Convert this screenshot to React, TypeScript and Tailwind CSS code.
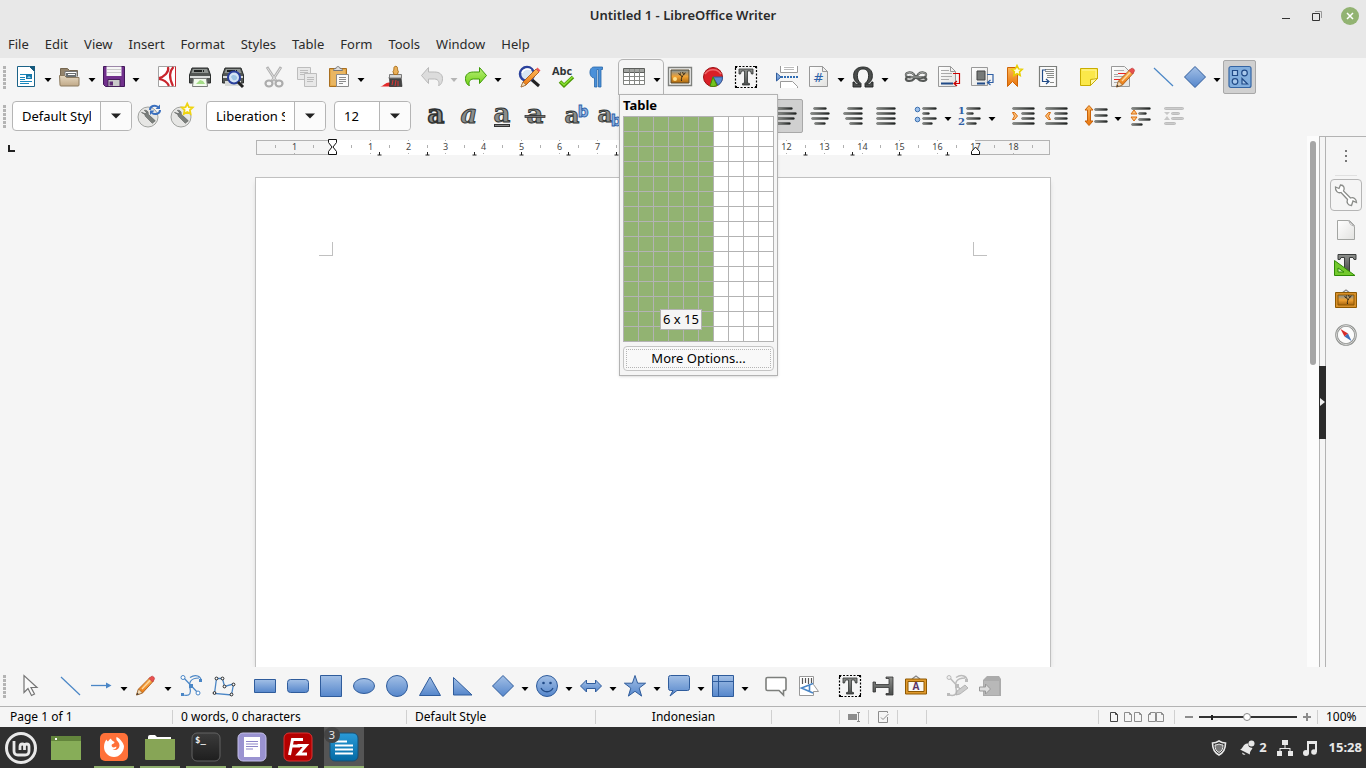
import type { ReactNode } from "react";

const menus = ["File", "Edit", "View", "Insert", "Format", "Styles", "Table", "Form", "Tools", "Window", "Help"];

/* ---------- shared drawing helpers ---------- */

function Defs() {
    return (
        <svg width="0" height="0" className="absolute" aria-hidden="true">
            <defs>
                <linearGradient id="blue" x1="0" y1="0" x2="0" y2="1"><stop offset="0" stopColor="#a3c0e6" /><stop offset="1" stopColor="#5586cb" /></linearGradient>
                <linearGradient id="bar" x1="0" y1="0" x2="1" y2="0"><stop offset="0" stopColor="#8b8e89" /><stop offset="1" stopColor="#1c1f1e" /></linearGradient>
                <linearGradient id="dark" x1="0" y1="0" x2="0" y2="1"><stop offset="0" stopColor="#8d8f8c" /><stop offset="1" stopColor="#4b4e4d" /></linearGradient>
                <linearGradient id="orange" x1="0" y1="0" x2="0" y2="1"><stop offset="0" stopColor="#fdb75a" /><stop offset="1" stopColor="#e8730a" /></linearGradient>
                <linearGradient id="paper" x1="0" y1="0" x2="1" y2="1"><stop offset="0" stopColor="#fff" /><stop offset="1" stopColor="#e2e2e0" /></linearGradient>
                <linearGradient id="tan" x1="0" y1="0" x2="0" y2="1"><stop offset="0" stopColor="#e6d8c0" /><stop offset="1" stopColor="#c0a988" /></linearGradient>
                <linearGradient id="green" x1="0" y1="0" x2="0" y2="1"><stop offset="0" stopColor="#b8ee7a" /><stop offset="1" stopColor="#73d216" /></linearGradient>
                <linearGradient id="sunset" x1="0" y1="0" x2="0" y2="1"><stop offset="0" stopColor="#7d92a0" /><stop offset=".5" stopColor="#f0a132" /><stop offset="1" stopColor="#a8660f" /></linearGradient>
                <linearGradient id="writer" x1="0" y1="0" x2="0" y2="1"><stop offset="0" stopColor="#2a9bd8" /><stop offset="1" stopColor="#0369a3" /></linearGradient>
                <linearGradient id="term" x1="0" y1="0" x2="0" y2="1"><stop offset="0" stopColor="#3b3b3b" /><stop offset="1" stopColor="#1e1e1e" /></linearGradient>
            </defs>
        </svg>
    );
}

function Icon({ children, className = "size-6" }: { children: ReactNode; className?: string }) {
    return <svg viewBox="0 0 24 24" className={`${className} shrink-0 overflow-visible`} fill="none" aria-hidden="true">{children}</svg>;
}

function Caret() {
    return <svg viewBox="0 0 8 24" className="h-6 w-2 shrink-0" aria-hidden="true"><path d="M.5 13h7L4 17z" fill="currentColor" /></svg>;
}

function Bars({ rows, fill = "url(#bar)", stroke = "#33363560" }: { rows: number[][]; fill?: string; stroke?: string }) {
    return <>{rows.map(([x, y, w]) => <rect key={y} x={x + .5} y={y + .5} width={w - 1} height="2" rx="1" fill={fill} stroke={stroke} />)}</>;
}

function Pencil() {
    return (
        <>
            <path d="M4.500 21l2-6L18 3.500l3.500 3.500L10.500 19z" fill="url(#orange)" stroke="#a4520c" strokeWidth=".8" />
            <path d="M10 15L18.500 6" stroke="#fdd9a0" strokeWidth="1.300" />
            <path d="M6.500 15l4 4-6 2z" fill="#f3dcb8" stroke="#8a5a28" strokeWidth=".6" /><path d="M4.500 21l.8-2.300 1.600 1.500z" fill="#333" />
            <path d="M17 4.500l1.800-1.800q1.600-1.200 3 .3t.2 3L20.500 8z" fill="#e8504f" stroke="#b33" strokeWidth=".6" />
        </>
    );
}

function Tree() {
    return <path d="M13.500 16c-.5-2 .3-3 .4-4.500-.6-1.700-2.500-1.500-3.500-3M13.900 12c.6-2 2.600-2 3.300-4.500M12.200 9.800c-.3-1-.1-1.500.3-2.300M15.500 9.500c-.2-1-.7-1.500-.9-2.500" stroke="#2b2212" strokeWidth="1" />;
}

function Letter({ x = 12, y = 19, size = 26, width = .9, italic = false, children }: { x?: number; y?: number; size?: number; width?: number; italic?: boolean; children: string }) {
    return <text x={x} y={y} fontSize={size} textAnchor="middle" fontFamily="DejaVu Serif" fontWeight="bold" fontStyle={italic ? "italic" : "normal"} fill="#8a8d8b" stroke="#2f3231" strokeWidth={width}>{children}</text>;
}

const blueShape = { fill: "url(#blue)", stroke: "#2f5c9c", strokeWidth: 1 };

/* ---------- standard toolbar icons ---------- */

const NewDoc = <Icon><path d="M3.500 1.500h12l5 5v15h-17z" fill="#fff" stroke="#1b6388" /><path d="M15 1h6v6z" fill="#15597c" /><path d="M6 9.500h6M6 12.500h5M6 14.500h5M6 16.500h12M6 18.500h9" stroke="#1887bd" strokeWidth="1.200" /><path d="M12 9h6v5h-6z" fill="#1678aa" /><path d="M13 13l2-2 2 2z" fill="#9bd3f0" /></Icon>;
const Open = <Icon><path d="M2.500 18V3.500h7l2 2h8V11" fill="#94846c" stroke="#75664f" /><path d="M7 6.500h12v8H7z" fill="#fff" stroke="#777" /><path d="M8 8h10v5H8z" fill="#6b6f70" /><path d="M10 9.500h7" stroke="#fff" /><path d="M1.500 10.500h5l2 2h12.500v7.500a1 1 0 0 1-1 1H3a1 1 0 0 1-1-1z" fill="url(#tan)" stroke="#8c7a5e" /></Icon>;
const Save = <Icon><path d="M1.500 1.500h21v20h-19l-2-2z" fill="#71308c" stroke="#42185a" /><path d="M4.500 1.500h15v9.500h-15z" fill="#f6f6f6" /><path d="M5 4.500h14M5 7.500h14" stroke="#ccc" /><path d="M6 14.500h12v7H6z" fill="#c9c9c9" stroke="#462059" /><path d="M7.500 16.500h3.500v4H7.500z" fill="#5f2b75" /></Icon>;
const Pdf = <Icon><path d="M3.500 1.500h17v20h-17z" fill="#fff" stroke="#a3a3a3" /><path d="M13 2c1.500 5-4 10-9 11M18.500 2c-5 5-4 12-.5 19M4 14c5 .500 8 3 10 7" stroke="#c9252d" strokeWidth="2.200" /><path d="M20.500 1.500v20" stroke="#c9252d" /></Icon>;
const printer = <><path d="M4 3h16l2.500 7v8h-21v-8z" fill="#525654" stroke="#2c2f2e" /><path d="M5 4h14l1.500 4h-17z" fill="#8f9491" /><path d="M6 6h10" stroke="#202322" strokeWidth="2" strokeDasharray="8 1" /><path d="M2 11h20v2H2z" fill="#d9dbda" /></>;
const Print = <Icon>{printer}<path d="M5.500 13.500h13l1 8h-15z" fill="#f3fbee" stroke="#7c7f7c" /><path d="M8 19l4-4 3 1 2 3z" fill="#a5dd88" /></Icon>;
const Preview = <Icon>{printer}<path d="M4 16h16v5H4z" fill="#d8dad8" /><circle cx="13" cy="12.500" r="6" fill="#d5e4f4" stroke="#2a409c" strokeWidth="2" /><path d="M10 12c1-3 5-2 6 0s-2 4-4 3z" fill="#9ec4e4" /><path d="M17 17l5 5" stroke="#222" strokeWidth="3" /></Icon>;
const Cut = <Icon><path d="M5 2l9 14M19 2l-9 14" stroke="#b2b2b2" strokeWidth="2.800" /><path d="M5.500 3l8 12M18.500 3l-8 12" stroke="#dedede" /><ellipse cx="7" cy="18.500" rx="3.500" ry="3" stroke="#acacac" strokeWidth="2.200" /><ellipse cx="17" cy="18.500" rx="3.500" ry="3" stroke="#acacac" strokeWidth="2.200" /></Icon>;
const Copy = <Icon><path d="M2.500 2.500h13v12h-13z" fill="#e8e8e8" stroke="#bdbdbd" /><path d="M5 5.500h8M5 7.500h8M5 9.500h7" stroke="#bdbdbd" /><path d="M9.500 8.500h12v13h-12z" fill="#e8e8e8" stroke="#bdbdbd" /><path d="M12 12.500h7M12 14.500h7M12 16.500h6" stroke="#bdbdbd" /></Icon>;
const Paste = <Icon><path d="M2.500 3.500h17v18h-17z" fill="#e3a747" stroke="#a96f20" /><path d="M4 5h14v15H4z" fill="#e9b662" /><path d="M6.500 5.500c0-2 1.500-2 2.500-2 0-2.500 4-2.500 4 0 1 0 2.500 0 2.500 2z" fill="#ddd" stroke="#777" /><path d="M9.500 9.500h12v12h-12z" fill="#fafafa" stroke="#8a8a8a" /><path d="M12 12.500h7M12 14.500h7M12 16.500h7M12 18.500h4" stroke="#8c8c8c" /></Icon>;
const Brush = <Icon><path d="M0 21.500c4-.500 5-4 9-4h8v4z" fill="#e32a2a" /><path d="M9 12h12l1 9.500H9.500c.5-3 .5-5.500-.5-9.500z" fill="#444" stroke="#222" strokeWidth=".6" /><path d="M12 20l1-5M15 21l1-6M18 21v-5" stroke="#d33" /><path d="M9.500 9.500h12v3.500h-12z" fill="#d5d5d3" stroke="#7b7b7b" /><path d="M14 9.500l-1-3c1-1 .8-3 1-4 .4-1.600 3-1.600 3.400 0 .2 1 0 3 1 4l-1 3z" fill="#eab15a" stroke="#a86d1a" /></Icon>;
const undoPath = "M8.500 2.500v4.500h6c5 0 8 2.500 8 6.500s-2 7-4 7c1-2 .6-6.500-4-6.500h-6v4.500L1.500 10.500z";
const Undo = <Icon><path d={undoPath} fill="#dcdcdc" stroke="#b9b9b9" /></Icon>;
const Redo = <Icon><path d={undoPath} fill="url(#green)" stroke="#3d9a06" transform="matrix(-1 0 0 1 24 0)" /></Icon>;
const Find = <Icon><path d="M14 14l8 7" stroke="#222" strokeWidth="3" /><circle cx="10" cy="9" r="7" fill="#d8e6f3" stroke="#2b429c" strokeWidth="2.500" /><path d="M5 8c1-4 6-5 9-3" stroke="#fff" strokeWidth="1.500" /><path d="M4 22l2-5L19 4l3 3L9 20z" fill="url(#orange)" stroke="#9f4f0d" strokeWidth=".8" /><path d="M4 22l2-5 3 3z" fill="#f3dcb8" stroke="#8a5a28" strokeWidth=".5" /><path d="M19 4l1.500-1.500 3 3L22 7z" fill="#ee5a5a" /></Icon>;
const Spell = <Icon><text x="12" y="10" fontSize="11" fontWeight="bold" textAnchor="middle" fontFamily="Open Sans" fill="#2f3436">Abc</text><path d="M10 16.500l4 4 9-8.500" stroke="#4e9a06" strokeWidth="3.600" /><path d="M10.500 16.700l3.500 3.300 8.500-8" stroke="#8ae234" strokeWidth="1.500" /></Icon>;
const Pilcrow = <Icon><path d="M19.500 2v2.500h-1.500v17.500h-2.500V4.500h-1.500v17.500h-2.500V13C5.500 13 5.500 2 11 2z" fill="#4a90d9" stroke="#2a67a8" strokeWidth=".8" /></Icon>;
const TableIcon = <Icon><path d="M.5 4.500h21v15H.5z" fill="#fff" stroke="#80827f" /><path d="M.5 3.500h21v4H.5z" fill="#a2a4a1" stroke="#5c5e5b" /><path d="M1 11.500h20M1 15.500h20M6.500 4v15M11.500 4v15M16.500 4v15" stroke="#858784" /></Icon>;
const Image = <Icon><path d="M.5 2.500h23v18H.5z" fill="#f3f3f1" stroke="#7f817e" strokeWidth="1.400" /><path d="M3 5h18v13H3z" fill="url(#sunset)" stroke="#5b4a2c" /><Tree /><circle cx="7" cy="14" r="2" fill="#ffe08a" /></Icon>;
const Chart = <Icon><circle cx="12" cy="12" r="9.500" fill="#d92027" stroke="#9b1014" /><path d="M12 12h9.500a9.500 9.500 0 0 1-4.500 8.200z" fill="#5b8bd0" stroke="#2f5c9c" /><path d="M12 12l4 8.600a9.500 9.500 0 0 1-7 .4z" fill="#73c41e" stroke="#418a0c" /><path d="M4 9a9 8 0 0 1 16 0" stroke="#f06a6c" strokeWidth="1.500" /></Icon>;
const TextBox = <Icon><path d="M1.500 1.500h21v21h-21z" stroke="#000" strokeWidth="1.200" strokeDasharray="2 1.500" /><path d="M1 1h2v2H1zM21 1h2v2h-2zM1 21h2v2H1zM21 21h2v2h-2z" fill="#000" /><path d="M5 4h14v5h-1.500l-1-3H13.500v12l2 .5v1.500h-7V18.500l2-.5V6H7.500l-1 3H5z" fill="url(#dark)" stroke="#303332" strokeWidth=".8" /></Icon>;
const PageBreak = <Icon><path d="M5.500 1v6.500h17V1M5.500 23v-6.500h12l5 5V23" fill="#fff" stroke="#999" /><path d="M9 2.500h10M9 4.500h10" stroke="#bbb" /><path d="M6 12h18" stroke="#2f6cb3" strokeWidth="2" strokeDasharray="2 1" /><path d="M1.500 8v8l4.500-4z" {...blueShape} /></Icon>;
const Field = <Icon><path d="M2.500 1.500h13l5 5v15h-18z" fill="url(#paper)" stroke="#999" /><path d="M15.500 1.500v5h5z" fill="#eee" stroke="#999" /><text x="11.500" y="17" fontSize="13" textAnchor="middle" fontFamily="DejaVu Sans" fill="#2d62aa">#</text></Icon>;
const Omega = <Icon><path d="M2 22v-5h1.500l1 2.200h4C3.800 17 2.600 14 2.600 10.500 2.600 5 6.500 2 12 2s9.400 3 9.400 8.500c0 3.500-1.200 6.500-5.900 8.700h4l1-2.200H22v5h-8v-3.500c2.800-2.500 3.600-4.500 3.600-8C17.600 6.500 15.500 4 12 4s-5.600 2.500-5.600 6.500c0 3.500.8 5.500 3.600 8V22z" fill="#4a4d4c" stroke="#1f2221" strokeWidth=".9" /></Icon>;
const Link = <Icon><g strokeLinecap="round"><path d="M10 9.500C7 6 1 7.500 2 10.500s7 2 10 .5M14 9.500c3-3.500 9-2 8 1s-7 2-10 .5M10 14c-3 3-9 2-8-.5s6-2 10-.5 8-2 10 .5-5 3.500-8 .5" stroke="#565957" strokeWidth="2.200" /><path d="M10 9.500C7 6 1 7.500 2 10.500M14 9.500c3-3.500 9-2 8 1M7 12h10" stroke="#c3c5c2" strokeWidth=".8" /></g></Icon>;
const Footnote = <Icon><path d="M1.500 1.500h12l5 5v15h-17z" fill="url(#paper)" stroke="#999" /><path d="M13.500 1.500v5h5" stroke="#999" /><path d="M4 5.500h8M4 8.500h11M4 11.500h11M4 14.500h8" stroke="#aaa" /><path d="M4 18.500h12" stroke="#204a87" strokeWidth="2" /><path d="M16 8.500h6.500v10h-5M20 16l-3 2.500 3 2.500" stroke="#cc0000" strokeWidth="1.200" /></Icon>;
const Endnote = <Icon><path d="M1.500 2.500h16v18h-16z" fill="url(#paper)" stroke="#999" /><path d="M7 6h8v9H7z" fill="#777a78" stroke="#444" /><path d="M7 18.500h8" stroke="#204a87" strokeWidth="2" /><path d="M17 9.500h6v8h-5M20.500 15l-3 2.500 3 2.500" stroke="#2f5fa5" strokeWidth="1.200" /></Icon>;
const star = "M12 1l3.200 6.800 7.300.9-5.400 5 1.400 7.300L12 17.400 5.500 21l1.400-7.300-5.400-5 7.300-.9z";
const Bookmark = <Icon><path d="M4.500 2.500h10v19l-5-5-5 5z" fill="url(#orange)" stroke="#cf6407" /><path d={star} transform="matrix(.5 0 0 .5 8 0)" fill="#fffce0" stroke="#e8cf00" strokeWidth="3" /></Icon>;
const CrossRef = <Icon><path d="M3.500 1.500h17v20h-17z" fill="#fbfbfb" stroke="#7c7e7b" strokeWidth="1.200" /><path d="M9 4.500h9M9 6.500h9M10 8.500h8M11 10.500h7M11 12.500h7M14 17.500h4" stroke="#8a8c89" /><path d="M10 5H6.500v11.500h6M10 14l3 2.500-3 2.500" stroke="#204a87" strokeWidth="1.200" /></Icon>;
const Note = <Icon><path d="M3.500 3.500h17v10l-7 7h-10z" fill="#fbe84a" stroke="#c9ad00" /><path d="M5 5h14v8l-3 1" stroke="#fff59a" /><path d="M13.500 20.500v-6l7-1z" fill="#fdf7a8" stroke="#c9ad00" /></Icon>;
const Track = <Icon><path d="M1.500 1.500h13l5 5v15h-18z" fill="url(#paper)" stroke="#999" /><path d="M4 5.500h10M4 9.500h4M4 11.500h11M4 17.500h6" stroke="#aaa" /><path d="M8 8.500h8M4 14.500h6" stroke="#ee2222" /><g transform="translate(2 1)"><Pencil /></g></Icon>;
const Line = <Icon><path d="M3 3l19 18" stroke="#4a86c6" strokeWidth="1.200" /></Icon>;
const Diamond = <Icon><path d="M12 1.500L22.500 12 12 22.500 1.500 12z" {...blueShape} /></Icon>;
const DrawFns = <Icon><rect x="1" y="1.500" width="22" height="21" rx="2" fill="#82aedd" stroke="#3465a4" strokeWidth="1.200" /><g stroke="#204a87" strokeWidth="1.200" fill="#a9c9ec"><path d="M4.500 5.500h5v5h-5z" /><circle cx="16.500" cy="8" r="2.800" /><circle cx="7" cy="16.500" r="2.800" /><path d="M14 13.500v5.500h5.500z" /></g></Icon>;

/* ---------- formatting toolbar icons ---------- */

const wrench = <><circle cx="11" cy="13" r="10" fill="#e6e6e4" stroke="#a0a29f" /><path d="M4.500 8.500l3 .8.800 3 7 7 3-2.500-7-6.500c.5-3-2-4.500-4-4l2 2.200-1.500 1.800z" fill="#7b7f7c" stroke="#585b59" strokeWidth=".6" /></>;
const UpdateStyle = <Icon>{wrench}<path d="M13 6c0-4 5-5.500 8-3M23 6c0 4-5 5-8 3" stroke="#3a6fbe" strokeWidth="2" /><path d="M23 .5v4.500h-4.500zM13 11V6.500h4.500z" fill="#3a6fbe" /></Icon>;
const NewStyle = <Icon>{wrench}<path d={star} transform="matrix(.52 0 0 .52 11 -1)" fill="#fffef0" stroke="#efd411" strokeWidth="3.500" /></Icon>;
const Bold = <Icon><Letter width={1.6}>a</Letter></Icon>;
const Italic = <Icon><Letter italic>a</Letter></Icon>;
const Underline = <Icon><Letter y={18}>a</Letter><rect x="4.500" y="20.500" width="15" height="2" fill="#888" stroke="#333" /></Icon>;
const Strike = <Icon><Letter>a</Letter><rect x="2" y="11.500" width="20" height="2" fill="#777" stroke="#333" strokeWidth=".8" /></Icon>;
const Super = <Icon><Letter x={8} y={19} size={23}>a</Letter><text x="19" y="13" fontSize="15" textAnchor="middle" fontFamily="DejaVu Sans" fontWeight="bold" fill="#8fb3e2" stroke="#2d5fa8" strokeWidth=".9">b</text></Icon>;
const Sub = <Icon><Letter x={8} y={18} size={23}>a</Letter><text x="19" y="22" fontSize="15" textAnchor="middle" fontFamily="DejaVu Sans" fontWeight="bold" fill="#8fb3e2" stroke="#2d5fa8" strokeWidth=".9">b</text></Icon>;
const AlignLeft = <Icon><Bars rows={[[2, 3, 16], [2, 8, 20], [2, 13, 18], [2, 18, 14]]} /></Icon>;
const AlignCenter = <Icon><Bars rows={[[5, 3, 14], [2, 8, 20], [3, 13, 18], [6, 18, 12]]} /></Icon>;
const AlignRight = <Icon><Bars rows={[[6, 3, 16], [2, 8, 20], [4, 13, 18], [8, 18, 14]]} /></Icon>;
const Justify = <Icon><Bars rows={[[2, 3, 20], [2, 8, 20], [2, 13, 20], [2, 18, 20]]} /></Icon>;
const Bullets = <Icon><circle cx="3.500" cy="5.500" r="2.300" fill="#9dc0ea" stroke="#3c70b0" /><circle cx="3.500" cy="15.500" r="2.300" fill="#9dc0ea" stroke="#3c70b0" /><Bars rows={[[8, 3, 15], [8, 8, 8], [8, 13, 15], [8, 18, 11]]} /></Icon>;
const Numbers = <Icon><g fontSize="10" fontFamily="DejaVu Serif" fontWeight="bold" fill="#2f5fa5"><text x="0" y="10">1</text><text x="0" y="21">2</text></g><Bars rows={[[8, 3, 15], [8, 8, 8], [8, 13, 15], [8, 18, 11]]} /></Icon>;
const Indent = <Icon><Bars rows={[[1, 3, 23], [10, 8, 14], [10, 13, 14], [1, 18, 23]]} /><path d="M1.500 8.500h2l3 3.500-3 3.500h-2l2-3.500z" fill="#fdc27a" stroke="#d96b0b" /></Icon>;
const Outdent = <Icon><Bars rows={[[1, 3, 23], [10, 8, 14], [10, 13, 14], [1, 18, 23]]} /><path d="M6.500 8.500h-2l-3 3.500 3 3.500h2l-2-3.500z" fill="#fdc27a" stroke="#d96b0b" /></Icon>;
const Spacing = <Icon><path d="M5 1.500l4 4.500H6.500v11H9l-4 4.500L1 17h2.500V6H1z" fill="url(#orange)" stroke="#c8620a" /><Bars rows={[[10, 4, 14], [10, 10, 14], [10, 16, 14]]} /></Icon>;
const ParaUp = <Icon><Bars rows={[[2, 3, 20], [9, 8, 9], [9, 14, 13], [2, 19, 12]]} /><path d="M5 6l3 4H2zM5 17l3-4H2z" fill="#fdc27a" stroke="#d96b0b" /></Icon>;
const ParaDown = <Icon><Bars rows={[[2, 3, 20], [9, 8, 9], [9, 13, 13], [2, 18, 12]]} fill="#ccc" stroke="#bdbdbd" /><path d="M5 11L8 8H2zM5 12l3 4H2z" fill="#c8c8c8" /></Icon>;

/* ---------- drawing toolbar icons ---------- */

const Pointer = <Icon><path d="M7 1.500v17l4-4 3.500 7 3-1.500-3.500-6.500h6z" fill="#fafafa" stroke="#757575" strokeWidth="1.200" /></Icon>;
const ArrowLine = <Icon><path d="M1 11.500h16" stroke="#4a86c6" strokeWidth="1.300" /><path d="M16 8.500v6l5.500-3z" fill="#4a86c6" /></Icon>;
const PencilIcon = <Icon><g transform="translate(-2 0)"><Pencil /></g></Icon>;
const Curve = <Icon><path d="M4 3l15 16M11 3.500c6-4 11-1 11 3M4 21c8 2 8-3 7-7S10 4 20 4" stroke="#4a86c6" strokeWidth="1.200" /><circle cx="4" cy="3.500" r="2" fill="#fff" stroke="#4a86c6" /><circle cx="19" cy="19" r="2" fill="#fff" stroke="#4a86c6" /><path d="M2 19h3v3H2zM10 10h4v4h-4zM20 5h3v3h-3z" fill="#4a86c6" /></Icon>;
const Polygon = <Icon><path d="M2.500 19.500l2-15h6l2 8 9-2.500-2 11z" stroke="#4a86c6" strokeWidth="1.300" /><g fill="#fff" stroke="#222"><circle cx="2.500" cy="19" r="1.400" /><circle cx="4.500" cy="4.500" r="1.400" /><circle cx="10.500" cy="4.500" r="1.400" /><circle cx="12.500" cy="12.500" r="1.400" /><circle cx="21.500" cy="10.500" r="1.400" /><circle cx="19.500" cy="20.500" r="1.400" /></g></Icon>;
const Rect = <Icon><path d="M1.500 5.500h21v13h-21z" {...blueShape} /></Icon>;
const RoundRect = <Icon><rect x="1.500" y="5.500" width="21" height="13" rx="3" {...blueShape} /></Icon>;
const Square = <Icon><path d="M1.500 1.500h21v21h-21z" {...blueShape} /></Icon>;
const Ellipse = <Icon><ellipse cx="12" cy="12" rx="10.500" ry="7.500" {...blueShape} /></Icon>;
const Circle = <Icon><circle cx="12" cy="12" r="10.500" {...blueShape} /></Icon>;
const Triangle = <Icon><path d="M12 3l10.500 18.500h-21z" {...blueShape} /></Icon>;
const RightTriangle = <Icon><path d="M2.500 3.500v17.500h18.500z" {...blueShape} /></Icon>;
const Smiley = <Icon><circle cx="12" cy="12" r="10.500" {...blueShape} /><circle cx="8.500" cy="9" r="1.300" fill="#204a87" /><circle cx="15.500" cy="9" r="1.300" fill="#204a87" /><path d="M6 14c2.500 5 9.500 5 12 0" stroke="#204a87" strokeWidth="1.300" /></Icon>;
const BlockArrow = <Icon><path d="M1.500 12L7.500 6v3.500h9V6l6 6-6 6v-3.500h-9V18z" {...blueShape} /></Icon>;
const Star = <Icon><path d="M12 1.500l2.600 7.700h8l-6.400 4.900 2.400 8-6.600-4.800-6.600 4.800 2.400-8-6.400-4.900h8z" {...blueShape} /></Icon>;
const Callout = <Icon><path d="M3.500 1.500h17a2 2 0 0 1 2 2v11a2 2 0 0 1-2 2H10l-7 5.500 3-5.500H3.500a2 2 0 0 1-2-2v-11a2 2 0 0 1 2-2z" {...blueShape} /></Icon>;
const Flow = <Icon><path d="M1.500 1.500h21v21h-21zM7.500 1.500v21M1.500 7.500h21" {...blueShape} /></Icon>;
const Balloon = <Icon><path d="M3.500 3.500h17a1.500 1.500 0 0 1 1.500 1.500v10a1.500 1.500 0 0 1-1.500 1.500h-1v4.500l-4.500-4.500H3.500A1.500 1.500 0 0 1 2 15V5a1.500 1.500 0 0 1 1.500-1.500z" fill="#fff" stroke="#7d7f7c" strokeWidth="1.600" /></Icon>;
const Vertical = <Icon><path d="M2.500 2.500h14v8l5 7h-5v4h-14z" fill="#fff" stroke="#999" /><path d="M5.500 4v6M8.500 4v5M11.500 4v6M14.500 4v5" stroke="#555" strokeWidth="1.200" /><path d="M16 9.500L4.500 14 16 19M12.500 11v7" stroke="#4a86c6" strokeWidth="1.600" /></Icon>;
const FitText = <Icon><path d="M2 8h2.500v2.500H18V4.500h-3V3h7v18h-7v-1.500h3v-6H4.500v4.500H2z" fill="url(#dark)" stroke="#333" strokeWidth=".8" /></Icon>;
const Fontwork = <Icon><path d="M8 5l4-3 4 3" stroke="#888" strokeWidth="1.300" /><path d="M1.500 5h21v15h-21z" fill="#e09a2d" stroke="#8f5902" /><path d="M4 7.500h16v10H4z" fill="#fbf9f4" stroke="#8f5902" /><text x="12" y="16" fontSize="10" textAnchor="middle" fontFamily="Open Sans" fontWeight="bold" fill="#5c3566">A</text></Icon>;
const Points = <Icon><path d="M4 3l12 13M11 3.500c6-4 11-1 11 3M4 21c8 2 8-3 7-7S10 4 20 4" stroke="#bbb" strokeWidth="1.500" /><circle cx="4" cy="3.500" r="2" fill="#eee" stroke="#bbb" /><path d="M2 19h3v3H2zM10 10h4v4h-4zM20 5h3v3h-3z" fill="#bbb" /><path d="M11 21l1-4 8-6 3 3-8 6z" fill="#ccc" stroke="#aaa" strokeWidth=".8" /></Icon>;
const Extrude = <Icon><path d="M5 6l4-4h12l2 3v17H5z" fill="#ababab" /><path d="M6 7h15v14H6z" fill="#b8b8b8" /><path d="M1.500 13h6v-3l5 5-5 5v-3h-6z" fill="#ddd" stroke="#999" /></Icon>;

/* ---------- widgets ---------- */

function Tool({ label, icon, pressed = false, disabled = false }: { label: string; icon?: ReactNode; pressed?: boolean; disabled?: boolean }) {
    return (
        <button type="button" aria-label={label} disabled={disabled} className={`flex h-[34px] w-[33px] shrink-0 items-center justify-center rounded-xs ${pressed ? "border border-[#a8a8a8] bg-[#d0d0d0]" : ""}`}>{icon}</button>
    );
}

function Split({ label, icon, disabled = false }: { label: string; icon?: ReactNode; disabled?: boolean }) {
    return (
        <div className={`flex w-11 shrink-0 ${disabled ? "text-[#b5b5b5]" : "text-black"}`}>
            <button type="button" aria-label={label} disabled={disabled} className="flex h-[34px] w-[31px] items-center justify-center">{icon}</button>
            <button type="button" aria-label={`${label} options`} disabled={disabled} className="flex h-[34px] flex-1 items-center justify-center"><Caret /></button>
        </div>
    );
}

function Gap() {
    return <span className="w-2 shrink-0" />;
}

function Toolbar({ label, grip = "w-3", children }: { label: string; grip?: string; children: ReactNode }) {
    return (
        <div role="toolbar" aria-label={label} className="flex h-[39px] shrink-0 items-center pb-px">
            <div className={`${grip} shrink-0 pl-[3px]`}>
                <svg viewBox="0 0 3 24" className="h-6 w-[3px]" aria-hidden="true"><path d="M1.500 1v23" stroke="#b4b4b4" strokeWidth="3" strokeDasharray="3 1" /></svg>
            </div>
            {children}
        </div>
    );
}

function Combo({ label, value, width }: { label: string; value: string; width: string }) {
    return (
        <div className={`${width} flex h-[30px] shrink-0 rounded-sm border border-[#b5b5b5] bg-white`}>
            <div className="min-w-0 flex-1 px-[9px]">
                <input aria-label={label} defaultValue={value} className="h-full w-full bg-transparent text-black outline-none" />
            </div>
            <button type="button" aria-label={`${label} list`} className="flex w-[31px] items-center justify-center rounded-r-sm border-l border-[#b5b5b5] bg-[#fbfbfb]">
                <svg viewBox="0 0 10 6" className="h-[6px] w-[10px]" aria-hidden="true"><path d="M0 .5h10L5 5.500z" fill="#222" /></svg>
            </button>
        </div>
    );
}

function TablePicker() {
    return (
        <div className="absolute top-[34px] left-0 z-10 w-[159px] border border-[#b3b3b3] bg-[#f5f5f5] px-[3px] pb-1 text-black shadow-sm">
            <h2 className="h-[21px] font-bold leading-[21px]">Table</h2>
            <div className="relative grid grid-cols-10 border-t border-l border-[#b3b3b3]">
                {Array.from({ length: 150 }, (_, i) => (
                    <span key={i} className={`h-[15px] border-r border-b border-[#b3b3b3] ${i % 10 < 6 ? "bg-[#92b372]" : "bg-white"}`} />
                ))}
                <output className="absolute right-[72px] bottom-3 border border-[#b3b3b3] bg-[#f5f5f5] px-[2px] leading-[19px]">6 x 15</output>
            </div>
            <button type="button" className="mt-1 w-full rounded-sm border border-[#c4c4c4] bg-[#f9f9f9] p-[2px]">
                <span className="block border border-dotted border-[#b5b5b5] leading-[17px]">More Options...</span>
            </button>
        </div>
    );
}

function Ruler() {
    const cm = 643 / 17;
    const zero = 76;
    const at = (n: number) => Math.round(zero + n * cm) + .5;
    return (
        <svg viewBox="0 0 794 20" className="h-5 w-[794px]" fontSize="9" fontFamily="Noto Sans" textAnchor="middle" aria-label="Horizontal ruler">
            <rect x=".5" y="1.500" width="793" height="14" fill="#f4f4f4" stroke="#b3b3b3" />
            <rect x={zero} y="1" width="643" height="15" fill="#fff" />
            {Array.from({ length: 42 }, (_, i) => i - 3).map((h) => h % 2 !== 0 && h < 39 && <path key={h} d={`M${at(h / 2)} 6v3`} stroke="#b0b0b0" />)}
            {Array.from({ length: 20 }, (_, i) => i - 1).map((n) => n !== 0 && (
                <g key={n}>
                    <path d={`M${at(n)} 1v1M${at(n)} 14v1`} stroke="#b0b0b0" />
                    <text x={at(n)} y="11" fill="#444">{Math.abs(n)}</text>
                </g>
            ))}
            {Array.from({ length: 13 }, (_, i) => i + 1).map((n) => <path key={n} d={`M${at(n * 1.25)} 13v3m-2 0h4`} stroke="#222" />)}
            <path d="M72.500.5h8v3l-3.500 4.500 3.500 4.500v3h-8v-3L76 8l-3.500-4.500z" fill="#fff" stroke="#111" />
            <path d="M715.500 15.500v-3l4-4.500 4 4.500v3z" fill="#fff" stroke="#111" />
        </svg>
    );
}

function Sidebar() {
    const btn = "flex size-8 items-center justify-center";
    return (
        <nav aria-label="Sidebar" className="flex w-10 flex-col items-center gap-[3px] border-t border-[#b3b3b3]">
            <button type="button" aria-label="Sidebar settings" className="flex h-[39px] w-[22px] items-center justify-center border-b border-[#e0e0e0]">
                <Icon><path d="M11 6h2v2h-2zM11 11h2v2h-2zM11 16h2v2h-2z" fill="#777" /></Icon>
            </button>
            <button type="button" aria-label="Properties" className={`${btn} rounded-sm border border-[#b5b5b5]`}>
                <Icon><path d="M1.500 4l3.500 1.500L6.500 2C10 2 11 5.500 9.500 8l7 7c3-1 6 1 6 4.500L19 18l-1.500 4.500c-4 0-5-3.500-4-6l-6.500-7C4 10.500 1 8 1.500 4z" fill="#fff" stroke="#8a8c89" strokeWidth="1.300" /></Icon>
            </button>
            <button type="button" aria-label="Page" className={btn}><Icon><path d="M3.500 2.500h12l5 5v14h-17z" fill="url(#paper)" stroke="#a3a5a2" /><path d="M14.500 2.500q1 5 6 6z" fill="#fff" stroke="#b5b5b5" /></Icon></button>
            <button type="button" aria-label="Styles" className={btn}><Icon><path d="M4 1.500h18v5h-2l-1-2h-3.500v14h-5v-14H7l-1 2H4z" fill="url(#dark)" stroke="#3a3d3c" /><path d="M.5 7.500v15H21z" fill="#73c92d" stroke="#2f8a06" /><path d="M4 15v4h6z" fill="#d8f5c0" stroke="#2f8a06" /></Icon></button>
            <button type="button" aria-label="Gallery" className={btn}><Icon><path d="M8 5l4-3 4 3" stroke="#888" strokeWidth="1.300" /><path d="M1.500 4.500h21v15h-21z" fill="#d8902a" stroke="#8f5902" /><path d="M4 7h16v10H4z" fill="url(#sunset)" stroke="#8f5902" /><Tree /></Icon></button>
            <button type="button" aria-label="Navigator" className={btn}><Icon><circle cx="12" cy="12" r="9.500" fill="#fbfbfb" stroke="#8f918e" strokeWidth="2.600" /><circle cx="12" cy="12" r="9.500" stroke="#d9d9d9" /><path d="M6.500 6l7.500 4.500-3.500 3z" fill="#d62b2b" /><path d="M17.500 18l-7-4.500 3.500-3z" fill="#3f6fb8" /></Icon></button>
        </nav>
    );
}

function StatusBar() {
    const cell = "flex shrink-0 items-center border-r border-[#d0d0d0] h-[14px]";
    const sheet = "M1.500 1.500h5l2 2v7h-7zM6.500 1.500v2h2";
    return (
        <footer className="flex h-[21px] shrink-0 items-center border-t border-[#b3b3b3] text-xs text-black">
            <span className={`${cell} w-[173px] pl-[10px]`}>Page 1 of 1</span>
            <span className={`${cell} w-[234px] pl-2`}>0 words, 0 characters</span>
            <span className={`${cell} w-[189px] pl-2`}>Default Style</span>
            <span className={`${cell} w-[176px] justify-center`}>Indonesian</span>
            <span className={`${cell} w-[68px]`} />
            <span className={`${cell} w-[29px] justify-center`}>
                <svg viewBox="0 0 12 12" className="size-3"><path d="M0 3h9v6H0z" fill="#8c8c8c" /><path d="M9 1.500h3M9 10.500h3M10.500 2v8" stroke="#8c8c8c" /></svg>
            </span>
            <span className={`${cell} w-[29px] justify-center`}>
                <svg viewBox="0 0 12 12" className="size-3" fill="none"><path d="M10.500 6v5.500h-9V.500h9V2M4 6.500l2 2L11.500 3" stroke="#8c8c8c" /></svg>
            </span>
            <span className={`${cell} w-[29px]`} />
            <span className={`${cell} min-w-0 flex-1`} />
            <span className={`${cell} w-[76px] justify-center gap-1`}>
                <svg viewBox="0 0 10 12" className="h-3 w-[10px]" fill="none"><path d={sheet} stroke="#444" /></svg>
                <svg viewBox="0 0 20 12" className="h-3 w-5" fill="none" stroke="#8c8c8c"><path d={sheet} /><path d={sheet} transform="translate(10)" /></svg>
                <svg viewBox="0 0 18 12" className="h-3 w-[18px]" fill="none" stroke="#8c8c8c"><path d="M3.500 1.500h5v9h-7v-7zM3.500 1.500v2h-2M9.500 1.500h5l2 2v7h-7zM14.500 1.500v2h2" /></svg>
            </span>
            <span className={`${cell} w-[143px] justify-center gap-[6px] pl-1`}>
                <button type="button" aria-label="Zoom out"><svg viewBox="0 0 8 8" className="size-2"><path d="M0 4h8" stroke="#8c8c8c" strokeWidth="2" /></svg></button>
                <span className="relative flex items-center">
                    <input type="range" aria-label="Zoom" defaultValue={49} className="h-[2px] w-[98px] appearance-none bg-[#333] [&::-webkit-slider-thumb]:size-2 [&::-webkit-slider-thumb]:appearance-none [&::-webkit-slider-thumb]:rounded-full [&::-webkit-slider-thumb]:border [&::-webkit-slider-thumb]:border-[#888] [&::-webkit-slider-thumb]:bg-white" />
                    <span className="absolute left-3 h-[5px] w-[2px] bg-[#222]" />
                </span>
                <button type="button" aria-label="Zoom in"><svg viewBox="0 0 8 8" className="size-2"><path d="M0 4h8M4 0v8" stroke="#8c8c8c" strokeWidth="2" /></svg></button>
            </span>
            <span className="w-12 shrink-0 pl-2">100%</span>
        </footer>
    );
}

const apps: { name: string; icon: ReactNode; active?: boolean }[] = [
    { name: "Firefox", icon: <><rect x="1" y="1" width="28" height="28" rx="5" fill="#ff7139" /><path d="M5 15c0-3 1-6 2.500-7.500.3 1 .8 1.500 1.500 2C9.500 8.500 11 7 12 6.500c0 1.500 2 2.500 3.500 3.500 0 1.500-1.500 2-2.500 2.200-1 1.300 0 3.300 2 3.300 1 0 1.800-.8 2.500-.6-.5 1.800-2 2.600-4 2.600 3.500 1.500 7-.5 7-4 0-2.500-1.500-4-3-5.500-.3-.8-.2-2 0-3 3 1 6.500 5 7.500 9C25 20 20.500 25 15 25S5 20.500 5 15z" fill="#fff" /></> },
    { name: "Files", icon: <><path d="M3 8V5q0-2 2-2h5l2 2h14v5H3z" fill="#fff" /><path d="M0 7h30v20q0 1-1 1H1q-1 0-1-1z" fill="#87a556" /></> },
    { name: "Terminal", icon: <><rect x="1" y="1" width="28" height="28" rx="5" fill="url(#term)" stroke="#626262" /><text x="4" y="11" fontSize="9" fontFamily="DejaVu Sans Mono" fontWeight="bold" fill="#eee">$_</text></> },
    { name: "Text Editor", icon: <><rect x="1" y="1" width="28" height="28" rx="5" fill="#9a93d1" stroke="#c4bfe8" /><path d="M7 5h16v20H7z" fill="#fff" /><path d="M9 9.500h12M9 12h12M9 14.500h12M9 17h7" stroke="#8d85c8" strokeWidth="1.200" /></> },
    { name: "FileZilla", icon: <><rect x="1" y="1" width="28" height="28" rx="5" fill="#b30000" stroke="#d33" /><path d="M20 7.500H9.500L6.500 23M8 14h9M14.500 13.500H23L15.500 22H24" stroke="#fff" strokeWidth="3" fill="none" /></> },
    { name: "LibreOffice Writer", active: true, icon: <><rect x="1" y="1" width="28" height="28" rx="5" fill="url(#writer)" stroke="#1b4e70" /><path d="M6 9.500h12M6 13.500h18M6 17.500h18M6 21.500h18" stroke="#fff" strokeWidth="2" /></> },
];

function Taskbar() {
    return (
        <div className="flex h-[41px] shrink-0 items-center bg-[#2f2f2f] text-[#e8e8e8]">
            <button type="button" aria-label="Menu" className="flex w-[42px] justify-center">
                <svg viewBox="0 0 32 32" className="size-8" fill="none" stroke="#e8e8e8"><circle cx="16" cy="16" r="14.500" strokeWidth="3" /><path d="M9 9v10q0 4 4 4h7q4 0 4-4v-4.500q0-2.500-2.200-2.500t-2.300 2.500V18v-3.500q0-2.500-2.200-2.500T15 14.500V18" strokeWidth="2.800" /></svg>
            </button>
            <button type="button" aria-label="Show Desktop" className="flex w-12 justify-center">
                <svg viewBox="0 0 30 24" className="h-6 w-[30px]"><path d="M0 0h30v24H0z" fill="#87ad58" /><path d="M0 0h30v5H0z" fill="#63853c" /><path d="M4 2h2v2H4z" fill="#fff" /></svg>
            </button>
            <div className="ml-1 flex gap-[6px]">
                {apps.map(({ name, icon, active }) => (
                    <button key={name} type="button" aria-label={name} className={`relative flex h-[41px] w-10 items-center justify-center border-b-2 border-[#8fae6d] ${active ? "bg-[#555]" : ""}`}>
                        <svg viewBox="0 0 30 30" className="size-[30px]" aria-hidden="true">{icon}</svg>
                        {active && <span className="absolute top-0 left-0 size-4 rounded-full bg-[#444] text-[11px] leading-4">3</span>}
                    </button>
                ))}
            </div>
            <div className="mr-1 ml-auto flex items-center font-bold">
                <svg viewBox="0 0 16 16" className="mr-3 size-4" fill="none" stroke="#e8e8e8"><path d="M8 1q3 2 6.500 2c0 6-1.500 9.500-6.500 12C3 12.500 1.500 9 1.500 3 5 3 8 1 8 1z" strokeWidth="1.600" /><path d="M8 4q2 1 4 1c0 4-1 6-4 7.500C5 11 4 9 4 5q2 0 4-1z" fill="#777" /></svg>
                <svg viewBox="0 0 16 16" className="mr-1 size-4" fill="#e8e8e8"><path d="M1 9.500C4 9 4 2.500 9.500 3.500q-1 4 4 4.500c-1 2.500-3 3.500-2.500 6.500zM3 12.500l3.500 1.800q-3 1.700-3.500-1.800z" /><circle cx="12.500" cy="3.500" r="3" /></svg>
                <span className="mr-[10px]">2</span>
                <svg viewBox="0 0 16 16" className="mr-[10px] size-4" fill="#e8e8e8"><path d="M5 0h6v5H5zM0 11h5v5H0zM11 11h5v5h-5zM7.500 5h1v3h5v3h-1V9h-9v2h-1V8h5z" /></svg>
                <svg viewBox="0 0 14 16" className="mr-3 h-4 w-[14px]" fill="#e8e8e8"><path d="M4 1h10v11h-2V4H6v9.500H4z" /><circle cx="3" cy="13" r="3" /><circle cx="11" cy="12" r="2.800" /></svg>
                <time>15:28</time>
            </div>
        </div>
    );
}

export default function App() {
    return (
        <div className="flex h-screen flex-col overflow-hidden bg-[#f5f5f5] font-['Noto_Sans',sans-serif] text-[13px] text-[#2b2b2b]">
            <Defs />
            <header className="h-[58px] shrink-0 bg-[#e8e8e8] pt-px">
                <div className="grid h-[30px] grid-cols-[1fr_auto_1fr] items-center">
                    <h1 className="col-start-2 font-semibold">Untitled 1 - LibreOffice Writer</h1>
                    <div className="mr-[7px] flex items-center justify-end gap-[17px]">
                        <button type="button" aria-label="Minimize"><svg viewBox="0 0 14 14" className="size-[14px]"><path d="M3 9.500h8" stroke="#333" /></svg></button>
                        <button type="button" aria-label="Restore"><svg viewBox="0 0 14 14" className="size-[14px]" fill="none"><path d="M5 2.500h6.500V9" stroke="#999" /><path d="M2.500 4.500h7v7h-7z" stroke="#333" /></svg></button>
                        <button type="button" aria-label="Close"><svg viewBox="0 0 18 18" className="size-[18px]"><circle cx="9" cy="9" r="9" fill="#92b372" /><path d="M6 6l6 6M12 6l-6 6" stroke="#fff" strokeWidth="1.500" /></svg></button>
                    </div>
                </div>
                <nav className="flex h-7 items-center">
                    {menus.map((m) => <button key={m} type="button" className="px-2">{m}</button>)}
                </nav>
            </header>

            <Toolbar label="Standard" grip="w-[10px]">
                <Split label="New" icon={NewDoc} /><Split label="Open" icon={Open} /><Split label="Save" icon={Save} />
                <Gap />
                <Tool label="Export as PDF" icon={Pdf} /><Tool label="Print" icon={Print} /><Tool label="Print preview" icon={Preview} />
                <Gap />
                <Tool label="Cut" icon={Cut} disabled /><Tool label="Copy" icon={Copy} disabled /><Split label="Paste" icon={Paste} />
                <Gap />
                <Tool label="Clone formatting" icon={Brush} />
                <Gap />
                <Split label="Undo" icon={Undo} disabled /><Split label="Redo" icon={Redo} />
                <Gap />
                <Tool label="Find and replace" icon={Find} /><Tool label="Spelling" icon={Spell} /><Tool label="Formatting marks" icon={Pilcrow} />
                <Gap />
                <div className="relative h-[34px] w-11 shrink-0 text-black">
                    <div className="rounded-t-sm shadow-[0_0_0_1px_#b3b3b3]"><Split label="Insert table" icon={TableIcon} /></div>
                    <TablePicker />
                </div>
                <Tool label="Image" icon={Image} /><Tool label="Chart" icon={Chart} /><Tool label="Text box" icon={TextBox} />
                <Gap />
                <Tool label="Page break" icon={PageBreak} /><Split label="Field" icon={Field} /><Split label="Special character" icon={Omega} />
                <Gap />
                <Tool label="Hyperlink" icon={Link} /><Tool label="Footnote" icon={Footnote} /><Tool label="Endnote" icon={Endnote} /><Tool label="Bookmark" icon={Bookmark} /><Tool label="Cross-reference" icon={CrossRef} />
                <Gap />
                <Tool label="Comment" icon={Note} /><Tool label="Track changes" icon={Track} />
                <Gap />
                <Tool label="Line" icon={Line} /><Split label="Basic shapes" icon={Diamond} /><Tool label="Draw functions" icon={DrawFns} pressed />
            </Toolbar>

            <Toolbar label="Formatting">
                <Combo label="Paragraph style" value="Default Style" width="w-[120px]" />
                <Tool label="Update style" icon={UpdateStyle} /><Tool label="New style" icon={NewStyle} />
                <Gap />
                <Combo label="Font name" value="Liberation Serif" width="w-[120px]" />
                <Gap />
                <Combo label="Font size" value="12" width="w-[77px]" />
                <Gap />
                <Tool label="Bold" icon={Bold} /><Tool label="Italic" icon={Italic} /><Tool label="Underline" icon={Underline} /><Tool label="Strikethrough" icon={Strike} />
                <Gap />
                <Tool label="Superscript" icon={Super} /><Tool label="Subscript" icon={Sub} /><Tool label="Clear formatting" />
                <Gap />
                <Split label="Font color" /><Split label="Highlighting" />
                <Gap /><Gap />
                <Tool label="Align left" icon={AlignLeft} pressed /><Tool label="Align center" icon={AlignCenter} /><Tool label="Align right" icon={AlignRight} /><Tool label="Justify" icon={Justify} />
                <Gap />
                <Split label="Bullets" icon={Bullets} /><Split label="Numbering" icon={Numbers} />
                <Gap />
                <Tool label="Increase indent" icon={Indent} /><Tool label="Decrease indent" icon={Outdent} />
                <Gap />
                <Split label="Line spacing" icon={Spacing} /><Tool label="Increase paragraph spacing" icon={ParaUp} /><Tool label="Decrease paragraph spacing" icon={ParaDown} disabled />
            </Toolbar>

            <div className="flex min-h-0 flex-1">
                <main className="relative flex min-w-0 flex-1 flex-col items-center overflow-hidden pt-[3px] pr-px">
                    <svg viewBox="0 0 7 7" className="absolute top-[9px] left-2 size-[7px]" aria-hidden="true"><path d="M1 0v6h6" fill="none" stroke="#222" strokeWidth="2" /></svg>
                    <Ruler />
                    <div className="mt-[18px] flex w-[796px] flex-1 items-start justify-between border border-b-0 border-[#c0c0c0] bg-white px-[63px] pt-16 shadow-md">
                        <span className="size-[14px] border-r border-b border-[#c0c0c0]" />
                        <span className="size-[14px] border-b border-l border-[#c0c0c0]" />
                    </div>
                </main>
                <div className="w-3 bg-[#fcfcfc] px-[3px] pt-[5px]">
                    <div className="h-[224px] rounded-sm bg-[#a6a6a6]" />
                </div>
                <div className="flex w-[7px] flex-col justify-center border border-b-0 border-[#b3b3b3] bg-[#f5f5f5]">
                    <button type="button" aria-label="Hide sidebar" className="-mx-px flex h-[73px] items-center justify-center bg-[#2b2b2b]">
                        <svg viewBox="0 0 5 8" className="h-2 w-[5px]"><path d="M0 0l5 4-5 4z" fill="#eee" /></svg>
                    </button>
                </div>
                <Sidebar />
            </div>

            <Toolbar label="Drawing">
                <Tool label="Select" icon={Pointer} />
                <Gap />
                <Tool label="Insert line" icon={Line} /><Split label="Lines and arrows" icon={ArrowLine} /><Split label="Curves and polygons" icon={PencilIcon} /><Tool label="Curve" icon={Curve} /><Tool label="Polygon" icon={Polygon} />
                <Gap />
                <Tool label="Rectangle" icon={Rect} /><Tool label="Rounded rectangle" icon={RoundRect} /><Tool label="Square" icon={Square} /><Tool label="Ellipse" icon={Ellipse} /><Tool label="Circle" icon={Circle} /><Tool label="Triangle" icon={Triangle} /><Tool label="Right triangle" icon={RightTriangle} />
                <Gap />
                <Split label="Diamond shapes" icon={Diamond} /><Split label="Symbol shapes" icon={Smiley} /><Split label="Block arrows" icon={BlockArrow} /><Split label="Stars" icon={Star} /><Split label="Callouts" icon={Callout} /><Split label="Flowchart" icon={Flow} />
                <Gap />
                <Tool label="Callout" icon={Balloon} /><Tool label="Vertical text" icon={Vertical} />
                <Gap />
                <Tool label="Insert text box" icon={TextBox} /><Tool label="Fit text" icon={FitText} /><Tool label="Fontwork" icon={Fontwork} />
                <Gap />
                <Tool label="Points" icon={Points} disabled /><Tool label="Extrusion" icon={Extrude} disabled />
            </Toolbar>
            <StatusBar />
            <Taskbar />
        </div>
    );
}
